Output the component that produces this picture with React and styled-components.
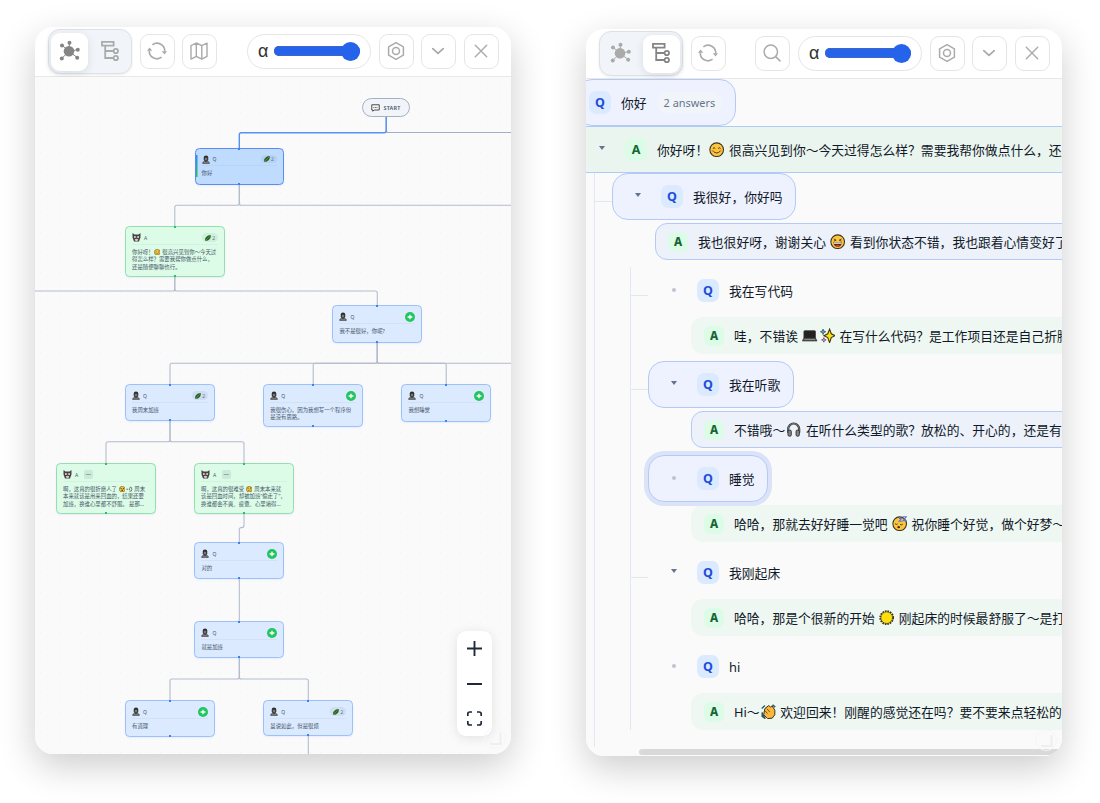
import React, { Component } from 'react'
import styled, { createGlobalStyle, css } from 'styled-components'

const cards = [
    { kind: 'q', x: 194.5, y: 147.7, w: 89.3, h: 37, active: true, leaf: 2, lines: ['你好'] },
    { kind: 'a', x: 125, y: 226, w: 100, h: 51, leaf: 2, lines: [['你好呀！', 'smile', ' 很高兴见到你～今天过'], '得怎么样？需要我帮你做点什么，', '还是随便聊聊也行。'] },
    { kind: 'q', x: 332.4, y: 305, w: 89.6, h: 37.7, plus: true, lines: ['我不是很好，你呢?'] },
    { kind: 'q', x: 125, y: 384, w: 90, h: 37, leaf: 2, lines: ['我周末加班'] },
    { kind: 'q', x: 263.3, y: 384, w: 99.7, h: 43.4, plus: true, lines: ['我很伤心，因为我想写一个程序但', '是没有思路。'] },
    { kind: 'q', x: 401.4, y: 384, w: 89.6, h: 37.6, plus: true, lines: ['我想睡觉'] },
    { kind: 'a', x: 56, y: 463, w: 100, h: 50.7, minus: true, lines: [['啊，这真的很折磨人了 ', 'gasp', 'puff', ' 周末'], '本来就该是用来回血的，结果还要', '加班，换谁心里都不舒服。 是那…'] },
    { kind: 'a', x: 194, y: 463, w: 100, h: 50.7, minus: true, lines: [['啊，这真的很难受 ', 'sad', ' 周末本来就'], '该是回血时间，却被加班“偷走了”，', '换谁都会不爽、疲惫、心里堵得…'] },
    { kind: 'q', x: 194.4, y: 542, w: 89.6, h: 37.3, plus: true, lines: ['对的'] },
    { kind: 'q', x: 194.4, y: 621, w: 89.6, h: 37, plus: true, lines: ['就是加班'] },
    { kind: 'q', x: 125, y: 700, w: 90, h: 37, plus: true, lines: ['有道理'] },
    { kind: 'q', x: 263.3, y: 700, w: 90, h: 36.3, leaf: 2, lines: ['虽说如此，但是很烦'] },
]

// from x, from y, turning y, to x, to y
const edges = [
    [239.3, 184.7, 205.3, 174.8, 226],
    [239.3, 184.7, 205.3, 530, 226],
    [174.8, 277, 291, 20, 305],
    [174.8, 277, 291, 377.3, 305],
    [377.3, 342.7, 363.3, 170, 384],
    [377.3, 342.7, 363.3, 313.2, 384],
    [377.3, 342.7, 363.3, 446.2, 384],
    [377.3, 342.7, 363.3, 530, 384],
    [170, 421, 441.8, 106, 463],
    [170, 421, 441.8, 244, 463],
    [244, 513.7, 527.6, 239.3, 542],
    [239.3, 658, 679, 170, 700],
    [239.3, 658, 679, 308.3, 700],
]

const topics = [
    { text: '我在写代码', link: true, answer: ['哇，不错诶 ', 'laptop', 'sparkles', ' 在写什么代码？是工作项目还是自己折腾'] },
    { text: '我在听歌', link: true, caret: true, boxed: true, answerBoxed: true, answer: ['不错哦～', 'phones', ' 在听什么类型的歌？放松的、开心的，还是有点'] },
    { text: '睡觉', boxed: true, focused: true, answer: ['哈哈，那就去好好睡一觉吧 ', 'sleep', ' 祝你睡个好觉，做个好梦～'] },
    { text: '我刚起床', link: true, caret: true, answer: ['哈哈，那是个很新的开始 ', 'sun', ' 刚起床的时候最舒服了～是打'] },
    { text: 'hi', answer: ['Hi～', 'clap', ' 欢迎回来！刚醒的感觉还在吗？要不要来点轻松的聊'] },
]

const emojiNames = ['smile', 'laugh', 'gasp', 'puff', 'sad', 'laptop', 'sparkles', 'phones', 'sleep', 'sun', 'clap']

function elbow([x1, y1, mid, x2, y2]) {
    const dir = x2 > x1 ? 1 : -1
    const r = 2 * dir
    return `M${x1} ${y1}V${mid - 2}Q${x1} ${mid} ${x1 + r} ${mid}H${x2 - r}Q${x2} ${mid} ${x2} ${mid + 2}V${y2}`
}

const Face = () => <circle cx="10" cy="10" r="8.9" fill="#fbc53d" stroke="#3f3520" strokeWidth="1.4" />

const drawings = {
    smile: <>
        <Face />
        <path d="M5 8.6q1.6-2.4 3.2 0M11.8 8.6q1.6-2.4 3.2 0M5.5 12q4.5 4.6 9 0" fill="none" stroke="#4a3a1c" strokeWidth="1.3" />
        <circle cx="4.8" cy="11.5" r="1.5" fill="#f08a4b" /><circle cx="15.2" cy="11.5" r="1.5" fill="#f08a4b" />
    </>,
    laugh: <>
        <Face />
        <path d="M5 6.5l3 1.6-3 1.2M15 6.5l-3 1.6 3 1.2" fill="none" stroke="#4a3a1c" strokeWidth="1.2" />
        <path d="M4.4 10.8h11.2q-.8 6-5.6 6t-5.6-6z" fill="#5a2218" /><path d="M5 11h10v1.8H5z" fill="#fff" />
        <path d="M7 15.3q3-2 6 0-3 2.3-6 0z" fill="#e5484d" />
    </>,
    gasp: <>
        <Face />
        <circle cx="6.5" cy="8" r="1.7" fill="#33291a" /><circle cx="13.5" cy="8" r="1.7" fill="#33291a" />
        <ellipse cx="10" cy="13.8" rx="2.2" ry="2.8" fill="#5a2218" />
    </>,
    puff: <path d="M1 10h6M11 4q7-3 7 6t-7 6M11 7v6" fill="none" stroke="#4b5563" strokeWidth="2.4" />,
    sad: <>
        <Face />
        <circle cx="6.5" cy="8.8" r="1.5" fill="#33291a" /><circle cx="13.5" cy="8.8" r="1.5" fill="#33291a" />
        <path d="M6 15q4-4 8 0M4.5 6l3-1.5M15.5 6l-3-1.5" fill="none" stroke="#4a3a1c" strokeWidth="1.4" />
    </>,
    laptop: <>
        <path d="M3.5 3.5h13a1 1 0 0 1 1 1v8.7h-15V4.5a1 1 0 0 1 1-1z" fill="#222" stroke="#3b3b3b" />
        <path d="M2 13.5h16l1.5 3.5H.5z" fill="#555" stroke="#222" strokeWidth=".7" /><path d="M3 14.8h14" stroke="#bbb" strokeWidth=".8" />
    </>,
    sparkles: <>
        <path d="M12.5 1.5l2.2 6 5 2.5-5 2.5-2.2 6.5-2.4-6.500-5-2.500 5-2.500z" fill="#fbdf0e" stroke="#3a3210" strokeWidth="1.4" />
        <path d="M4 1.5l1 2.4 2.6 1-2.6 1L4 8.5l-1-2.6-2.5-1 2.500-1z" fill="#39b7c9" stroke="#243c42" strokeWidth=".9" />
        <path d="M5 12.500l.9 2.100 2.100.9-2.100.9L5 18.500l-.9-2.100-2.100-.9 2.100-.9z" fill="#f38ac4" stroke="#54304a" strokeWidth=".8" />
    </>,
    phones: <>
        <path d="M2.8 14V9.5a7.2 7.5 0 0 1 14.4 0V14" fill="none" stroke="#333" strokeWidth="2.8" />
        <path d="M2.8 13V9.5a7.2 7.5 0 0 1 14.4 0V13" fill="none" stroke="#999" strokeWidth=".9" />
        <rect x="2.6" y="10.5" width="4.3" height="8" rx="1.8" fill="#888" stroke="#222" strokeWidth="1.1" />
        <rect x="13.1" y="10.5" width="4.3" height="8" rx="1.8" fill="#888" stroke="#222" strokeWidth="1.1" />
    </>,
    sleep: <>
        <Face />
        <path d="M4 10q1.6 1.8 3.4.3M10.5 11q1.8 1.5 3.5-.5" fill="none" stroke="#4a3a1c" strokeWidth="1.3" />
        <ellipse cx="8.7" cy="14.6" rx="1.8" ry="1.5" fill="#5a2218" />
        <path d="M9 3h3.6L9.3 6.8H13M14 1h4.500l-4 5H19" fill="none" stroke="#5a78d8" strokeWidth="1.5" />
    </>,
    sun: <>
        <circle cx="10" cy="10" r="8.3" fill="none" stroke="#3a3210" strokeWidth="2.6" strokeDasharray="2 1.26" />
        <circle cx="10" cy="10" r="7.6" fill="#ffdf0a" stroke="#4b4112" strokeWidth="1" />
    </>,
    clap: <>
        <path d="M5 6l5-4 2.5 2 2-1.5L18 8v6l-3.5 4.5-6 .5-5-5z" fill="#fbb83a" stroke="#3a3220" strokeWidth="1.3" />
        <path d="M5 8.500l3.500 4M7.500 6l4 4.500" stroke="#4a3a1c" fill="none" />
        <path d="M1 6l4-4M1.500 11v5l4 3-3-5z" stroke="#2e5660" strokeWidth="1.8" fill="#2e5660" />
        <path d="M15 1l3.500 3" stroke="#2e5660" strokeWidth="2" />
    </>,
}

const Rich = ({ parts }) => {
    const list = Array.isArray(parts) ? parts : [parts]
    return list.map((part, i) => (
        emojiNames.includes(part)
            ? <Emoji key={i} viewBox="0 0 20 20">{drawings[part]}</Emoji>
            : <span key={i}>{part}</span>
    ))
}

const HubIcon = () => (
    <svg width="22" height="22" viewBox="0 0 22 22">
        <path d="M11 11.3L11.4 2.8M11 11.3L4 5.2M11 11.3l9-1.7M11 11.3l8.2 6.2M11 11.3L3.7 18.500" stroke="currentColor" strokeWidth="1" />
        <g fill="currentColor">
            <circle cx="11" cy="11.3" r="5.3" /><circle cx="11.5" cy="2.8" r="2" /><circle cx="4" cy="5.5" r="2" />
            <circle cx="19.8" cy="9.7" r="2" /><circle cx="19.2" cy="17.7" r="2" /><circle cx="3.8" cy="18.6" r="2" />
        </g>
    </svg>
)

const TreeIcon = () => (
    <svg width="20" height="22" viewBox="0 0 20 22" fill="none" stroke="currentColor" strokeWidth="1.8">
        <path d="M2 1.9h11.6v3.7H2zM5.2 5.6V18h8.2M5.2 11h8.2" />
        <circle cx="15.8" cy="11" r="2.2" /><circle cx="15.8" cy="18" r="2.2" />
    </svg>
)

const RefreshIcon = () => (
    <svg width="20" height="20" viewBox="0 0 20 20" fill="none" stroke="currentColor" strokeWidth="1.6">
        <path d="M5.4 3.8A7.7 7.7 0 0 1 17.7 10.500M14.6 16.2A7.7 7.7 0 0 1 2.3 9.5" />
        <path d="M14.7 10.2h5.3l-2.4 3.3zM0 9.8h5.3L2.5 6.5z" fill="currentColor" stroke="none" />
    </svg>
)

const MapIcon = () => (
    <svg width="20" height="20" viewBox="0 0 20 20" fill="none" stroke="currentColor" strokeWidth="1.4" strokeLinejoin="round">
        <path d="M2 4.700l5.300-2.700 5.500 2.700L18 2v13.400l-5.200 2.700-5.500-2.700L2 18.100zM7.300 2v13.400M12.800 4.700v13.400" />
    </svg>
)

const SearchIcon = () => (
    <svg width="20" height="20" viewBox="0 0 20 20" fill="none" stroke="currentColor" strokeWidth="1.5" strokeLinecap="round">
        <circle cx="8.8" cy="8.7" r="6.7" /><path d="M13.7 13.600l4.300 4.300" />
    </svg>
)

const NutIcon = () => (
    <svg width="20" height="20" viewBox="0 0 20 20" fill="none" stroke="currentColor" strokeWidth="1.5" strokeLinejoin="round">
        <path d="M10 1.700l7.400 4.200v8.300L10 18.400l-7.400-4.200V5.900z" /><circle cx="10" cy="10" r="3.5" />
    </svg>
)

const ChevronIcon = () => (
    <svg width="20" height="20" viewBox="0 0 20 20" fill="none" stroke="currentColor" strokeWidth="1.8" strokeLinecap="round" strokeLinejoin="round">
        <path d="M4.800 7.600l5.200 4.800 5.200-4.800" />
    </svg>
)

const CloseIcon = () => (
    <svg width="20" height="20" viewBox="0 0 20 20" stroke="currentColor" strokeWidth="1.4" strokeLinecap="round">
        <path d="M4.300 4.300l11.400 11.400M15.700 4.300L4.300 15.700" />
    </svg>
)

const PersonIcon = () => (
    <svg width="8" height="9" viewBox="0 0 16 18">
        <path d="M1.500 17.500v-3l4-2.500h5l4 2.500v3z" fill="#777" stroke="#333" />
        <path d="M3.500 10V5q0-4 4.500-4t4.500 4v5l-3 3h-3z" fill="#2c2c2c" />
        <path d="M5.500 5.500h5v4L8 11.500 5.500 9.500z" fill="#777" />
    </svg>
)

const BotIcon = () => (
    <svg width="9" height="9" viewBox="0 0 18 18">
        <path d="M1 0l4 3h8l4-3v9l-3 8H4L1 9z" fill="#444" />
        <path d="M4 6.500h3.500v3H4zM10.500 6.500H14v3h-3.500z" fill="#eee" /><path d="M5.500 12h7l-1.500 4H7z" fill="#ccc" /><path d="M8 8.500h2v3H8z" fill="#d33" />
    </svg>
)

const LeafIcon = () => (
    <svg width="6" height="6" viewBox="0 0 14 14">
        <path d="M1 13q-1-6 3-9 4-3.500 9-3 0 5-2.500 8.500-3 3.500-9.500 3.500z" fill="#1f6b1a" stroke="#17330f" /><path d="M2 12L11 3" stroke="#8fd05a" strokeWidth="1" />
    </svg>
)

const Resize = () => (
    <Grip>
        <svg width="22" height="22" viewBox="0 0 22 22" fill="none">
            <circle cx="11" cy="11" r="10.5" stroke="#f5f5f5" /><path d="M16.500 6v11H6" stroke="#efefef" strokeWidth="2" />
        </svg>
    </Grip>
)

const Toolbar = ({ view }) => (
    <Bar>
        <Toggle>
            <ToggleButton $on={view === 'graph'}><HubIcon /></ToggleButton>
            <ToggleButton $on={view === 'tree'}><TreeIcon /></ToggleButton>
        </Toggle>
        <IconButton $gap={8}><RefreshIcon /></IconButton>
        {view === 'graph' && <IconButton $gap={7}><MapIcon /></IconButton>}
        <Spacer />
        {view === 'tree' && <IconButton $gap={0}><SearchIcon /></IconButton>}
        <Slider>
            <Alpha>α</Alpha>
            <Track><Thumb /></Track>
        </Slider>
        <IconButton $gap={8}><NutIcon /></IconButton>
        <IconButton $gap={7}><ChevronIcon /></IconButton>
        <IconButton $gap={8}><CloseIcon /></IconButton>
    </Bar>
)

const Card = ({ card }) => (
    <CardBox style={{ left: card.x - 35, top: card.y - 77, width: card.w, height: card.h }} $kind={card.kind} $active={card.active}>
        <CardHead>
            {card.kind === 'q' ? <PersonIcon /> : <BotIcon />}
            <Role>{card.kind.toUpperCase()}</Role>
            {card.minus && <Fold>—</Fold>}
            <Spacer />
            {card.leaf && <Leaf><LeafIcon />{card.leaf}</Leaf>}
            {card.plus && (
                <Plus><svg width="6" height="6" viewBox="0 0 6 6"><path d="M3 .8v4.400M.6 3h4.800" stroke="#fff" strokeWidth="1.3" /></svg></Plus>
            )}
        </CardHead>
        <CardBody>
            {card.lines.map((line, i) => <CardLine key={i}><Rich parts={line} /></CardLine>)}
        </CardBody>
    </CardBox>
)

class App extends Component {
    renderTopic(topic) {
        return (
            <React.Fragment key={topic.text}>
                <Question $boxed={topic.boxed} $focused={topic.focused} $link={topic.link}>
                    <Switch>{topic.caret ? <Caret /> : <Dot />}</Switch>
                    <Badge $kind="q">Q</Badge>
                    <span>{topic.text}</span>
                </Question>
                <Answer $boxed={topic.answerBoxed}>
                    <Badge $kind="a" $small>A</Badge>
                    <span><Rich parts={topic.answer} /></span>
                </Answer>
            </React.Fragment>
        )
    }

    render() {
        return (
            <Page>
                <GlobalStyle />
                <Panel>
                    <Toolbar view="graph" />
                    <Canvas>
                        <Wires viewBox="35 77 476 677">
                            <g fill="none" stroke="#b3bccc" strokeWidth="1.1">
                                <path d="M386.2 117V130.5Q386.2 132.5 388.2 132.5H511" stroke="#a0aec4" />
                                {edges.map((edge, i) => <path key={i} d={elbow(edge)} />)}
                                <path d="M239.3 579V621M308.3 736V754" />
                                <path d="M386.2 117V130.7Q386.2 132.7 384.2 132.7H241.3Q239.3 132.7 239.3 134.7V148" stroke="#5590f5" strokeWidth="1.4" />
                            </g>
                        </Wires>
                        <Start>
                            <svg width="9" height="8" viewBox="0 0 18 16" fill="none" stroke="#333" strokeWidth="1.7">
                                <path d="M1.5 1.5h15v10.5H6L3.5 14.5V12h-2z" /><path d="M5 7h8" strokeDasharray="1.6 1.4" />
                            </svg>
                            START
                        </Start>
                        {cards.map((card, i) => <Card key={i} card={card} />)}
                        <ZoomPad>
                            <svg width="19" height="19" viewBox="0 0 19 19" stroke="#1e293b" strokeWidth="1.9"><path d="M9.5 2v15M2 9.5h15" /></svg>
                            <svg width="19" height="19" viewBox="0 0 19 19" stroke="#1e293b" strokeWidth="1.9"><path d="M2 10h15" /></svg>
                            <svg width="19" height="19" viewBox="0 0 19 19" fill="none" stroke="#1e293b" strokeWidth="1.7">
                                <path d="M2.8 7V5q0-2 2-2H7M12 3h2.2q2 0 2 2v2M16.2 12v2q0 2-2 2H12M7 16H4.8q-2 0-2-2v-2" />
                            </svg>
                        </ZoomPad>
                        <Resize />
                    </Canvas>
                </Panel>
                <Panel $low>
                    <Toolbar view="tree" />
                    <Tree>
                        <Question $boxed $root>
                            <Badge $kind="q">Q</Badge>
                            <span>你好</span>
                            <Count>2 answers</Count>
                        </Question>
                        <RootAnswer>
                            <Switch><Caret /></Switch>
                            <Badge $kind="a">A</Badge>
                            <span><Rich parts={['你好呀！', 'smile', ' 很高兴见到你～今天过得怎么样？需要我帮你做点什么，还是']} /></span>
                        </RootAnswer>
                        <Branch $outer>
                            <Question $boxed $link>
                                <Switch><Caret /></Switch>
                                <Badge $kind="q">Q</Badge>
                                <span>我很好，你好吗</span>
                            </Question>
                            <Answer $boxed>
                                <Badge $kind="a" $small>A</Badge>
                                <span><Rich parts={['我也很好呀，谢谢关心 ', 'laugh', ' 看到你状态不错，我也跟着心情变好了']} /></span>
                            </Answer>
                            <Branch>{topics.map(topic => this.renderTopic(topic))}</Branch>
                        </Branch>
                        <Scroll />
                        <Resize />
                    </Tree>
                </Panel>
            </Page>
        )
    }
}

export default App

const GlobalStyle = createGlobalStyle`
    * { box-sizing: border-box; }
    body {
        margin: 0;
        background: #fff;
        font-family: "Noto Sans", "Noto Sans CJK SC", sans-serif;
        overflow: hidden;
    }
    svg { display: block; flex-shrink: 0; }
`;

const Page = styled.div`
    display: flex;
    align-items: flex-start;
    gap: 75px;
    height: 803px;
    padding: 27px 0 0 35px;
`;

const Panel = styled.div`
    width: 476px;
    height: 727px;
    flex-shrink: 0;
    margin-top: ${p => (p.$low ? 2 : 0)}px;
    border-radius: 18px;
    background: #fff;
    box-shadow: 0 12px 36px rgba(0, 0, 0, 0.2);
    overflow: hidden;
`;

const Bar = styled.div`
    display: flex;
    align-items: center;
    height: 50px;
    padding: 0 12px 0 13px;
    border-bottom: 1px solid #e8e8e8;
`;

const Toggle = styled.div`
    display: flex;
    align-items: center;
    gap: 4px;
    width: 84px;
    height: 45px;
    padding: 0 2px;
    border: 1px solid #dbe1e7;
    border-radius: 12px;
    background: #f1f5f9;
    box-shadow: 0 1px 3px rgba(15, 23, 42, 0.08);
`;

const ToggleButton = styled.div`
    display: flex;
    align-items: center;
    justify-content: center;
    width: 38px;
    height: 38px;
    padding: 0 1px 1px 0;
    border-radius: 9px;
    color: ${p => (p.$on ? '#858585' : '#aaa')};
    background: ${p => (p.$on ? '#fff' : 'transparent')};
    box-shadow: ${p => (p.$on ? '0 2px 8px rgba(15, 23, 42, 0.1)' : 'none')};
`;

const IconButton = styled.div`
    display: flex;
    align-items: center;
    justify-content: center;
    width: 35px;
    height: 35px;
    flex-shrink: 0;
    margin-left: ${p => p.$gap}px;
    padding: 0 1px 1px 0;
    border: 1px solid #e5e5e5;
    border-radius: 9px;
    color: #aaa;
    background: #fff;
`;

const Spacer = styled.div`
    flex: 1;
`;

const Slider = styled.div`
    display: flex;
    align-items: center;
    width: 124px;
    height: 35px;
    margin-left: 8px;
    padding: 0 0 1px 10px;
    border: 1px solid #e5e5e5;
    border-radius: 18px;
`;

const Alpha = styled.span`
    width: 16px;
    font-family: "Liberation Sans", sans-serif;
    font-size: 18px;
    line-height: 20px;
    color: #333;
`;

const Track = styled.div`
    display: flex;
    align-items: center;
    justify-content: flex-end;
    width: 85.500px;
    height: 10px;
    border-radius: 5px;
    background: #2563eb;
    box-shadow: inset 0 0 0 1px #3f66c4;
`;

const Thumb = styled.div`
    width: 19px;
    height: 19px;
    border-radius: 50%;
    background: #2563eb;
`;

const Canvas = styled.div`
    position: relative;
    height: 677px;
    overflow: hidden;
    background: #fafafa radial-gradient(circle at 5.5px 5.5px, #f1f1f1 0.6px, transparent 1px) 0 0 / 10px 10px;
`;

const Wires = styled.svg`
    width: 476px;
    height: 677px;
`;

const Start = styled.div`
    position: absolute;
    left: 327px;
    top: 21px;
    display: flex;
    align-items: center;
    justify-content: center;
    gap: 3px;
    width: 48px;
    height: 19.4px;
    border: 1px solid #a3b1c4;
    border-radius: 10px;
    background: #f1f5f9;
    color: #475569;
    font-size: 5.5px;
    font-weight: 600;
    letter-spacing: 0.2px;
`;

const CardBox = styled.div`
    position: absolute;
    padding: 5.5px 6px 0;
    border: 1px solid ${p => (p.$active ? '#5b8df0' : p.$kind === 'q' ? '#9cc0f9' : '#93dfae')};
    border-radius: 4.5px;
    background: ${p => (p.$active ? '#bfdbfe' : p.$kind === 'q' ? '#dbeafe' : '#dcfce7')};
    box-shadow: 0 1px 2px rgba(59, 130, 246, 0.1);

    &::before, &::after {
        content: '';
        position: absolute;
        left: calc(50% - 1px);
        width: 2px;
        height: 2px;
        background: ${p => (p.$kind === 'q' ? '#3b82f6' : '#22c55e')};
    }
    &::before { top: -1px; }
    &::after { bottom: -1px; }

    ${p => p.$active && css`
        background: linear-gradient(#3b82f6, #22c55e) 0 6px / 1.5px 22px no-repeat #bfdbfe;
    `}
`;

const CardHead = styled.div`
    display: flex;
    align-items: center;
    height: 12px;
    padding-bottom: 2px;
    box-shadow: inset 0 -1px 0 rgba(100, 116, 139, 0.07);
`;

const Role = styled.span`
    margin-left: 3px;
    font-size: 5px;
    line-height: 8px;
    color: #475569;
`;

const Fold = styled.span`
    width: 9px;
    height: 9px;
    margin-left: 5.5px;
    border-radius: 2px;
    background: rgba(15, 23, 42, 0.08);
    color: #475569;
    font-size: 5.5px;
    line-height: 8.5px;
    text-align: center;
`;

const Leaf = styled.span`
    display: flex;
    align-items: center;
    justify-content: center;
    gap: 1.5px;
    width: 16px;
    height: 8.5px;
    border-radius: 5px;
    background: rgba(100, 116, 139, 0.1);
    font-size: 5px;
    color: #64748b;
`;

const Plus = styled.span`
    display: flex;
    align-items: center;
    justify-content: center;
    width: 10px;
    height: 10px;
    flex-shrink: 0;
    border-radius: 50%;
    background: #22c55e;
`;

const CardBody = styled.div`
    padding-top: 4px;
`;

const CardLine = styled.div`
    height: 7.75px;
    font-size: 5.4px;
    line-height: 7.75px;
    white-space: pre;
    color: #475569;
`;

const Emoji = styled.svg`
    display: inline-block;
    width: 1.2em;
    height: 1.2em;
    margin: 0 0.08em;
    vertical-align: -0.22em;
`;

const ZoomPad = styled.div`
    position: absolute;
    left: 422px;
    top: 554px;
    display: flex;
    flex-direction: column;
    align-items: center;
    justify-content: space-between;
    width: 35px;
    height: 105px;
    padding: 8px 0;
    border-radius: 9px;
    background: #fff;
    box-shadow: 0 2px 12px rgba(0, 0, 0, 0.1);
`;

const Grip = styled.div`
    position: absolute;
    right: 5px;
    bottom: 5px;
`;

const Tree = styled.div`
    position: relative;
    height: 677px;
    overflow: hidden;
    background: #fafafa;
    font-size: 12.8px;
    line-height: 20px;
    color: #111827;
    white-space: pre;
`;

const Branch = styled.div`
    height: ${p => (p.$outer ? 574 : 463)}px;
    margin-left: ${p => (p.$outer ? 8 : 18)}px;
    padding-left: 17px;
    border-left: 1px solid #e2e8f0;
`;

const Question = styled.div`
    position: relative;
    display: flex;
    align-items: center;
    width: max-content;
    height: 47px;
    margin-left: ${p => (p.$root ? -10 : 0)}px;
    margin-bottom: ${p => (p.$root ? 0 : 3)}px;
    padding: 0 12.5px 0 12px;
    border: 1px solid ${p => (p.$boxed ? '#b6c9f6' : 'transparent')};
    border-radius: 16px;
    background: ${p => (p.$boxed ? '#eef2ff' : 'transparent')};
    box-shadow: ${p => (p.$focused ? '0 0 0 4px #dae3f8' : 'none')};

    ${p => p.$link && css`
        &::before {
            content: '';
            position: absolute;
            left: -18px;
            top: 27px;
            width: 17px;
            height: 1px;
            background: #e2e8f0;
        }
    `}
`;

const Answer = styled.div`
    display: flex;
    align-items: center;
    width: 600px;
    height: 37px;
    margin: 0 0 7px 43px;
    padding-left: 12px;
    border: 1px solid ${p => (p.$boxed ? '#b6c9f6' : 'transparent')};
    border-radius: 12px;
    background: ${p => (p.$boxed ? '#ecf1fa' : '#eef7f2')};
`;

const RootAnswer = styled.div`
    display: flex;
    align-items: center;
    width: 640px;
    height: 47px;
    margin-left: -10px;
    padding-left: 12px;
    border: 1px solid #afcaf4;
    background: #ebf5f0;
`;

const Switch = styled.span`
    display: flex;
    align-items: center;
    justify-content: center;
    width: 25px;
    margin-right: 11px;
`;

const Caret = styled.i`
    margin-bottom: 3px;
    border: 3px solid transparent;
    border-top: 4px solid #64748b;
    border-bottom: 0;
`;

const Dot = styled.i`
    width: 4px;
    height: 4px;
    margin-bottom: 1px;
    border-radius: 50%;
    background: #bcc4d0;
`;

const Badge = styled.span`
    width: ${p => (p.$small ? 20 : 22)}px;
    height: ${p => (p.$small ? 20 : 23)}px;
    flex-shrink: 0;
    margin-right: 10px;
    border-radius: ${p => (p.$small ? 6 : 7)}px;
    background: ${p => (p.$kind === 'q' ? '#dbeafe' : '#dcfce7')};
    color: ${p => (p.$kind === 'q' ? '#1d4ed8' : '#166534')};
    font-size: ${p => (p.$small ? 11.5 : 12.5)}px;
    font-weight: ${p => (p.$small ? 800 : 700)};
    line-height: ${p => (p.$small ? 20 : 24)}px;
    text-align: center;
`;

const Count = styled.span`
    height: 21px;
    margin-left: 10px;
    padding: 0 7px;
    border-radius: 11px;
    background: #f1f5f9;
    color: #64748b;
    font-size: 10.9px;
    line-height: 22px;
`;

const Scroll = styled.div`
    position: absolute;
    left: 53px;
    right: 0;
    bottom: 1px;
    height: 6px;
    border-radius: 3px;
    background: #d9d9d9;
`;
